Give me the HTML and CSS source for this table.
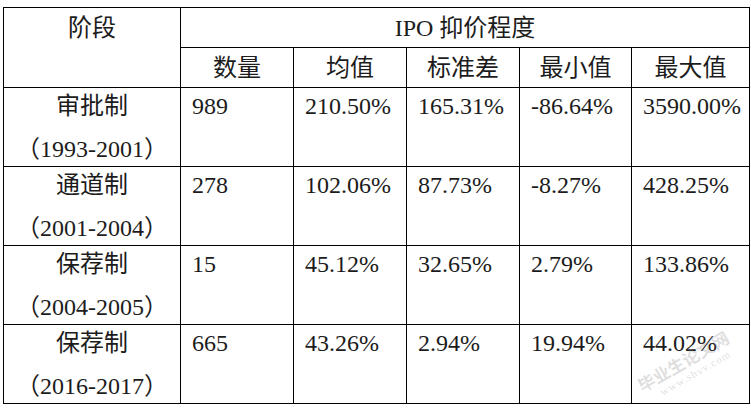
FILE: index.html
```html
<!DOCTYPE html>
<html lang="zh-CN">
<head>
<meta charset="utf-8">
<title>IPO 抑价程度</title>
<link rel="stylesheet" href="styles.css">
</head>
<body>
<div class="page">
  <table class="stats">
    <colgroup>
      <col class="c-stage">
      <col class="c-num">
      <col class="c-num">
      <col class="c-num">
      <col class="c-min">
      <col class="c-max">
    </colgroup>
    <thead>
      <tr class="h1">
        <th rowspan="2" class="stage-head">阶段</th>
        <th colspan="5">IPO 抑价程度</th>
      </tr>
      <tr class="h2">
        <th>数量</th>
        <th>均值</th>
        <th>标准差</th>
        <th>最小值</th>
        <th>最大值</th>
      </tr>
    </thead>
    <tbody>
      <tr>
        <td class="stage"><div class="stage-text">审批制<br>（1993-2001）</div></td>
        <td>989</td>
        <td>210.50%</td>
        <td>165.31%</td>
        <td>-86.64%</td>
        <td>3590.00%</td>
      </tr>
      <tr>
        <td class="stage"><div class="stage-text">通道制<br>（2001-2004）</div></td>
        <td>278</td>
        <td>102.06%</td>
        <td>87.73%</td>
        <td>-8.27%</td>
        <td>428.25%</td>
      </tr>
      <tr>
        <td class="stage"><div class="stage-text">保荐制<br>（2004-2005）</div></td>
        <td>15</td>
        <td>45.12%</td>
        <td>32.65%</td>
        <td>2.79%</td>
        <td>133.86%</td>
      </tr>
      <tr>
        <td class="stage"><div class="stage-text">保荐制<br>（2016-2017）</div></td>
        <td>665</td>
        <td>43.26%</td>
        <td>2.94%</td>
        <td>19.94%</td>
        <td>44.02%</td>
      </tr>
    </tbody>
  </table>
  <div class="watermark">
    <span class="wm-cn">毕业生论文网</span>
    <span class="wm-url">www.sbvv.com</span>
  </div>
</div>
</body>
</html>
```

FILE: styles.css
```css
html, body {
  margin: 0;
  padding: 0;
  background: #ffffff;
}

.page {
  position: relative;
  width: 751px;
  height: 408px;
  overflow: hidden;
  padding: 7px 0 0 3px;
  box-sizing: border-box;
}

.stats {
  border-collapse: collapse;
  table-layout: fixed;
  width: 746px;
  font-family: "Liberation Serif", "Noto Sans CJK SC", serif;
  font-size: 24px;
  color: #1c1c1c;
}

.c-stage { width: 177px; }
.c-num { width: 113px; }
.c-min { width: 112px; }
.c-max { width: 118px; }

.stats th,
.stats td {
  border: 1px solid #000;
  padding: 0;
  font-weight: normal;
}

.stats th {
  text-align: center;
  vertical-align: middle;
  line-height: 38px;
}

.stats th.stage-head {
  vertical-align: top;
  line-height: 40px;
}

.h1 { height: 40px; }
.h2 { height: 40px; }

.stats tbody tr { height: 79px; }

.stats td {
  vertical-align: top;
  text-align: left;
  padding-left: 11px;
  line-height: 36px;
}

.stats td.stage {
  text-align: center;
  padding-left: 0;
}

.stage-text {
  height: 74px;
  margin-top: -3px;
  line-height: 43px;
}

.watermark {
  position: absolute;
  left: 634px;
  top: 378px;
  display: flex;
  flex-direction: column;
  gap: 0;
  transform: rotate(-30deg);
  transform-origin: left top;
  color: rgba(140, 140, 140, 0.28);
  pointer-events: none;
}

.wm-cn {
  font-family: "Noto Sans CJK SC", sans-serif;
  font-size: 17px;
  font-weight: bold;
  line-height: 20px;
  letter-spacing: 0;
}

.wm-url {
  font-family: "Liberation Serif", serif;
  font-size: 11px;
  line-height: 12px;
  letter-spacing: 1px;
  padding-left: 16px;
}
```
